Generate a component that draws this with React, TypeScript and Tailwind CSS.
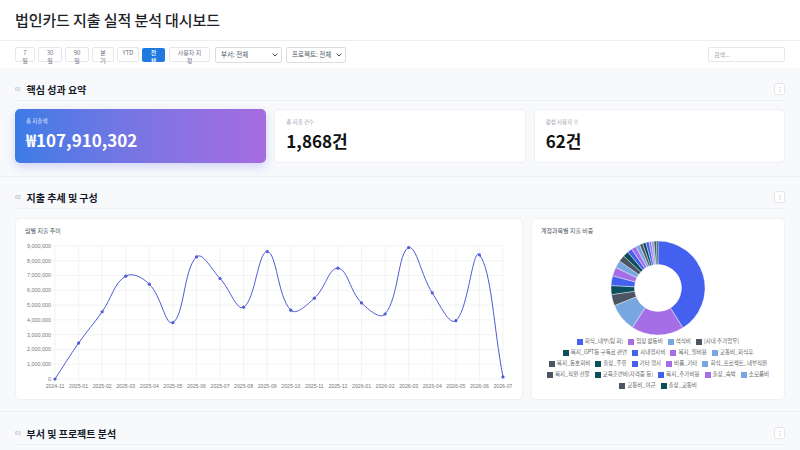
import React from 'react'

const months = [
  '2024-11', '2025-01', '2025-02', '2025-03', '2025-04', '2025-05', '2025-06', '2025-07', '2025-08', '2025-09',
  '2025-10', '2025-11', '2025-12', '2026-01', '2026-02', '2026-03', '2026-04', '2026-05', '2026-06', '2026-07',
]
const values = [
  0, 2.43, 4.55, 6.96, 6.42, 3.82, 8.26, 6.8, 4.86, 8.62,
  4.66, 5.47, 7.5, 5.15, 4.4, 8.9, 5.83, 3.95, 8.4, 0.14,
].map((v) => v * 1_000_000)

const palette = ['#4361ee', '#a66ee6', '#78a6e0', '#4b5563', '#0b4f5c']

const accounts = [
  { name: '회식_내부(팀 회)', deg: 148 },
  { name: '임장 활동비', deg: 65 },
  { name: '석식비', deg: 35 },
  { name: '[사내 추가업무]', deg: 14 },
  { name: '복지_GPT등 구독료 관련', deg: 11 },
  { name: '사내행사비', deg: 12 },
  { name: '복지_일비용', deg: 11 },
  { name: '교통비_회식후', deg: 9 },
  { name: '복지_동호회비', deg: 8 },
  { name: '출장_주유', deg: 7 },
  { name: '기타 행사', deg: 6 },
  { name: '비품_기타', deg: 6 },
  { name: '회식_프로젝트_내부직원', deg: 5 },
  { name: '복지_직원 선물', deg: 4 },
  { name: '교육훈련비(자격증 등)', deg: 4 },
  { name: '복지_추가비용', deg: 4 },
  { name: '출장_숙박', deg: 3 },
  { name: '소모품비', deg: 3 },
  { name: '교통비_야근', deg: 3 },
  { name: '출장_교통비', deg: 2 },
]
const legendRows = [
  [0, 1, 2, 3],
  [4, 5, 6, 7],
  [8, 9, 10, 11, 12],
  [13, 14, 15, 16, 17],
  [18, 19],
]

function Kebab() {
  return (
    <div className="w-[11px] h-[12px] rounded-[2px] border border-[#e5e7eb] bg-white flex items-center justify-center text-[6px] leading-none text-[#9ca3af]">
      ⋮
    </div>
  )
}

function SectionHeader({ no, title }: { no: string; title: string }) {
  return (
    <div className="flex items-center justify-between h-[12px] pb-[5px] box-content border-b border-[#eef0f3]">
      <div className="flex items-center gap-[6px]">
        <span className="text-[5px] text-[#9ca3af]">{no}</span>
        <span className="text-[10px] font-bold text-[#111827]">{title}</span>
      </div>
      <Kebab />
    </div>
  )
}

function LineChart() {
  const left = 30
  const right = 478
  const top = 7
  const bottom = 140
  const x = (i: number) => left + (i * (right - left)) / (months.length - 1)
  const y = (v: number) => bottom - (v / 9_000_000) * (bottom - top)
  const pts = values.map((v, i) => ({ x: x(i), y: y(v) }))

  // chart.js style spline, tension 0.4
  const t = 0.4
  const ctrl = pts.map((p, i) => {
    const p0 = pts[i - 1] ?? p
    const p2 = pts[i + 1] ?? p
    const d01 = Math.hypot(p.x - p0.x, p.y - p0.y)
    const d12 = Math.hypot(p2.x - p.x, p2.y - p.y)
    const s01 = d01 / (d01 + d12 || 1)
    const s12 = d12 / (d01 + d12 || 1)
    return {
      prev: { x: p.x - t * s01 * (p2.x - p0.x), y: Math.min(bottom, Math.max(top, p.y - t * s01 * (p2.y - p0.y))) },
      next: { x: p.x + t * s12 * (p2.x - p0.x), y: Math.min(bottom, Math.max(top, p.y + t * s12 * (p2.y - p0.y))) },
    }
  })
  let d = `M${pts[0].x},${pts[0].y}`
  for (let i = 1; i < pts.length; i++) {
    const a = ctrl[i - 1].next
    const b = ctrl[i].prev
    d += ` C${a.x},${a.y} ${b.x},${b.y} ${pts[i].x},${pts[i].y}`
  }

  return (
    <svg width="487" height="158" className="block font-['Liberation_Sans',sans-serif]">
      {Array.from({ length: 10 }, (_, k) => (
        <g key={k}>
          <line x1={left - 3} x2={right} y1={y(k * 1_000_000)} y2={y(k * 1_000_000)} stroke="#ebebeb" strokeWidth="0.6" />
          <text x={left - 4} y={y(k * 1_000_000) + 1.9} textAnchor="end" fontSize="5.4" fill="#777">
            {(k * 1_000_000).toLocaleString('en-US')}
          </text>
        </g>
      ))}
      {months.map((m, i) => (
        <g key={m}>
          <line x1={x(i)} x2={x(i)} y1={top} y2={bottom + 3} stroke="#ebebeb" strokeWidth="0.6" />
          <text x={x(i)} y={bottom + 9} textAnchor="middle" fontSize="5.2" fill="#777">
            {m}
          </text>
        </g>
      ))}
      <path d={d} fill="none" stroke="#4f5bd5" strokeWidth="1" />
      {pts.map((p, i) => (
        <circle key={i} cx={p.x} cy={p.y} r="1.6" fill="#4f5bd5" />
      ))}
    </svg>
  )
}

function Donut() {
  const cx = 47
  const cy = 47
  const R = 47
  const r = 23.5
  let start = 0
  const pt = (rad: number, deg: number) => {
    const a = ((deg - 90) * Math.PI) / 180
    return `${cx + rad * Math.cos(a)},${cy + rad * Math.sin(a)}`
  }
  return (
    <svg width="94" height="94" className="block mx-auto">
      {accounts.map((s, i) => {
        const a0 = start
        const a1 = start + s.deg
        start = a1
        const large = s.deg > 180 ? 1 : 0
        const d = `M${pt(R, a0)} A${R},${R} 0 ${large} 1 ${pt(R, a1)} L${pt(r, a1)} A${r},${r} 0 ${large} 0 ${pt(r, a0)} Z`
        return <path key={s.name} d={d} fill={palette[i % 5]} stroke="#fff" strokeWidth="0.4" />
      })}
    </svg>
  )
}

export default function App() {
  return (
    <div className="w-[800px] h-[450px] overflow-hidden bg-[#f8f9fb] font-['Noto_Sans_CJK_KR','Noto_Sans',sans-serif] text-[#111827]">
      {/* Title bar */}
      <header className="h-[41px] bg-white border-b border-[#eceef1] px-[15px] flex items-center">
        <h1 className="text-[15px] font-medium tracking-[-0.1px] text-[#1f2329]">법인카드 지출 실적 분석 대시보드</h1>
      </header>

      {/* Toolbar */}
      <div className="h-[27px] bg-white px-[15px] pt-[6px] flex items-start justify-between">
        <div className="flex items-start">
          {[
            { label: ['7', '일'], w: 'w-[20px]' },
            { label: ['30', '일'], w: 'w-[24px]' },
            { label: ['90', '일'], w: 'w-[24px]' },
            { label: ['분', '기'], w: 'w-[22px]' },
            { label: ['YTD'], w: 'w-[22px]' },
          ].map((b, i) => (
            <div
              key={i}
              className={`${b.w} h-[15px] mr-[3px] rounded-[2px] border border-[#e5e7eb] bg-white text-center text-[6px] leading-[8px] pt-[1px] text-[#6b7280]`}
            >
              {b.label[0]}
              {b.label[1] && <br />}
              {b.label[1]}
            </div>
          ))}
          <div className="w-[23px] h-[14px] mt-[1px] mr-[4px] rounded-[2px] bg-[#1f7ae0] text-center text-[6px] leading-[8px] pt-[1px] text-white font-medium">
            전<br />체
          </div>
          <div className="w-[41px] h-[15px] mr-[5px] rounded-[2px] border border-[#e5e7eb] bg-white text-center text-[6px] leading-[8px] pt-[1px] text-[#6b7280]">
            사용자 지<br />정
          </div>
          <div className="w-[67px] h-[16px] mr-[4px] rounded-[2px] border border-[#d9dce1] bg-white flex items-center justify-between pl-[5px] pr-[3px] text-[6.5px] text-[#4b5563]">
            <span>부서: 전체</span>
            <svg width="6" height="4" viewBox="0 0 6 4">
              <path d="M0.7 0.8 L3 3 L5.3 0.8" fill="none" stroke="#333" strokeWidth="0.9" />
            </svg>
          </div>
          <div className="w-[60px] h-[16px] rounded-[2px] border border-[#d9dce1] bg-white flex items-center justify-between pl-[5px] pr-[3px] text-[6.5px] text-[#4b5563]">
            <span>프로젝트: 전체</span>
            <svg width="6" height="4" viewBox="0 0 6 4">
              <path d="M0.7 0.8 L3 3 L5.3 0.8" fill="none" stroke="#333" strokeWidth="0.9" />
            </svg>
          </div>
        </div>
        <div className="w-[77px] h-[15px] rounded-[2px] border border-[#e5e7eb] bg-white flex items-center px-[5px] text-[6px] text-[#9ca3af]">
          검색...
        </div>
      </div>

      {/* 01 KPI */}
      <section className="px-[15px] pt-[15px] pb-[13px] border-b border-[#eceef1]">
        <SectionHeader no="01" title="핵심 성과 요약" />
        <div className="mt-[8px] grid grid-cols-3 gap-[8px]">
          <div className="h-[54px] rounded-[5px] bg-gradient-to-r from-[#3a7be6] to-[#a66be0] px-[11px] pt-[8px] shadow-[0_4px_10px_rgba(99,102,241,0.25)]">
            <div className="text-[5.5px] text-white/80">총 지출액</div>
            <div className="mt-[5px] text-[17px] font-bold leading-[20px] text-white">₩107,910,302</div>
          </div>
          <div className="h-[54px] rounded-[5px] bg-white border border-[#eef0f3] px-[11px] pt-[8px]">
            <div className="text-[5.5px] text-[#9ca3af]">총 지출 건수</div>
            <div className="mt-[5px] text-[17px] font-bold leading-[20px] text-[#111]">1,868건</div>
          </div>
          <div className="h-[54px] rounded-[5px] bg-white border border-[#eef0f3] px-[11px] pt-[8px]">
            <div className="text-[5.5px] text-[#9ca3af]">활성 사용자 수</div>
            <div className="mt-[5px] text-[17px] font-bold leading-[20px] text-[#111]">62건</div>
          </div>
        </div>
      </section>

      {/* 02 Trend */}
      <section className="px-[15px] pt-[14px] pb-[11px] border-b border-[#eceef1]">
        <SectionHeader no="02" title="지출 추세 및 구성" />
        <div className="mt-[9px] grid grid-cols-[2fr_1fr] gap-[8px]">
          <div className="h-[182px] rounded-[5px] bg-white border border-[#eef0f3] pl-[9px] pt-[8px]">
            <div className="text-[6px] leading-[8px] text-[#4b5563]">월별 지출 추이</div>
            <div className="mt-[4px]">
              <LineChart />
            </div>
          </div>
          <div className="h-[182px] rounded-[5px] bg-white border border-[#eef0f3] pt-[8px]">
            <div className="pl-[9px] text-[6px] leading-[8px] text-[#4b5563]">계정과목별 지출 비중</div>
            <div className="mt-[6px]">
              <Donut />
            </div>
            <div className="mt-[3px] flex flex-col gap-[4px]">
              {legendRows.map((row, ri) => (
                <div key={ri} className="flex justify-center gap-x-[5px]">
                  {row.map((idx) => (
                    <div key={idx} className="flex items-center gap-[2px]">
                      <span className="w-[6px] h-[6px]" style={{ backgroundColor: palette[idx % 5] }} />
                      <span className="text-[5.5px] leading-[7px] text-[#666]">{accounts[idx].name}</span>
                    </div>
                  ))}
                </div>
              ))}
            </div>
          </div>
        </div>
      </section>

      {/* 03 Dept / project */}
      <section className="px-[15px] pt-[15px]">
        <SectionHeader no="03" title="부서 및 프로젝트 분석" />
      </section>
    </div>
  )
}
